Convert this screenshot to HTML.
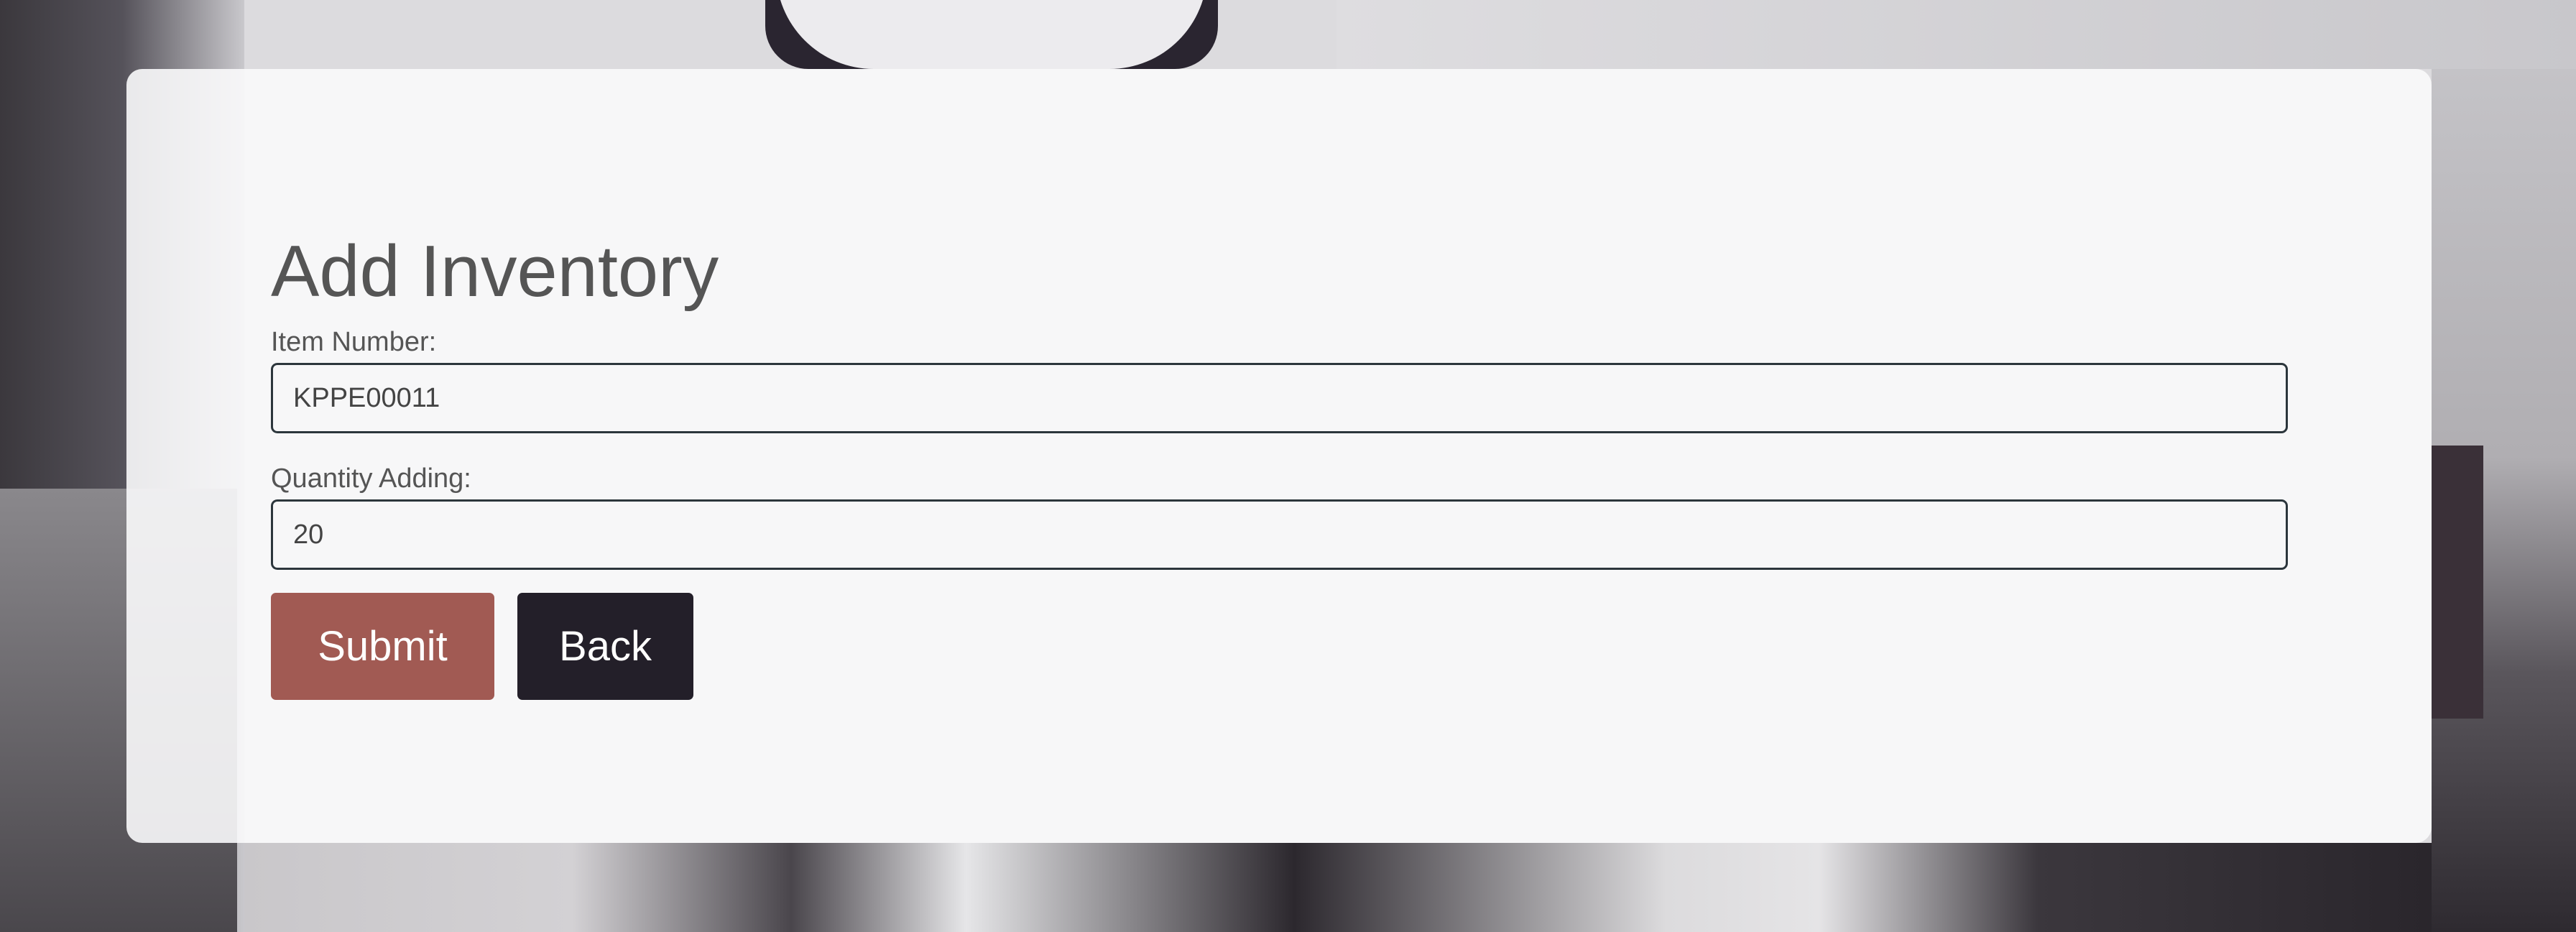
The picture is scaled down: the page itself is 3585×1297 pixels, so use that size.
<!DOCTYPE html>
<html><head><meta charset="utf-8"><style>
html,body{margin:0;padding:0;}
body{width:3585px;height:1297px;position:relative;overflow:hidden;font-family:"Liberation Sans",sans-serif;background:#dcdbde;}
.bg{position:absolute;}
.card{position:absolute;left:176px;top:96px;width:3208px;height:1077px;background:rgba(250,250,251,0.9);border-radius:22px;}
h1{position:absolute;left:377px;top:318px;margin:0;font-weight:normal;font-size:101px;color:#555;line-height:120px;}
.lbl{position:absolute;left:377px;font-size:38px;color:#555;line-height:44px;}
.inp{position:absolute;left:377px;width:2801px;height:92px;border:3px solid #2c363c;border-radius:9px;box-sizing:content-box;font-size:38px;color:#444;line-height:92px;}
.inp span{margin-left:28px;}
.btn{position:absolute;top:825px;height:149px;border-radius:7px;color:#fff;font-size:58px;line-height:149px;text-align:center;}
</style></head><body>
<div class="bg" style="left:0;top:0;width:340px;height:1297px;background:linear-gradient(90deg,#3b383d 0,#55525a 50%,#c9c8cc 100%);"></div>
<div class="bg" style="left:0;top:680px;width:330px;height:617px;background:linear-gradient(180deg,#8a888c,#4a474c);"></div>
<div class="bg" style="left:1065px;top:-40px;width:630px;height:136px;background:#2a2530;border-radius:0 0 60px 60px;"></div>
<div class="bg" style="left:1080px;top:-40px;width:600px;height:136px;background:#ecebee;border-radius:0 0 140px 140px;"></div>
<div class="bg" style="left:1860px;top:0;width:1725px;height:96px;background:linear-gradient(90deg,#dedde0,#c8c7cb);"></div>
<div class="bg" style="left:3384px;top:96px;width:201px;height:1201px;background:linear-gradient(180deg,#c4c3c7 0,#b0aeb2 45%,#5a565c 70%,#2e2a30 100%);"></div>
<div class="bg" style="left:3384px;top:620px;width:72px;height:380px;background:#3a3038;"></div>
<div class="bg" style="left:340px;top:1173px;width:3044px;height:124px;background:linear-gradient(90deg,#c9c7ca 0,#d3d1d4 15%,#4a464c 25%,#e6e6e8 33%,#2c282e 48%,#dcdbdd 65%,#e5e4e6 72%,#3b373d 82%,#2a262c 100%);"></div>
<div class="card"></div>
<h1>Add Inventory</h1>
<div class="lbl" style="top:454px;">Item Number:</div>
<div class="inp" style="top:505px;"><span>KPPE00011</span></div>
<div class="lbl" style="top:644px;">Quantity Adding:</div>
<div class="inp" style="top:695px;"><span>20</span></div>
<div class="btn" style="left:377px;width:311px;background:#a15a53;">Submit</div>
<div class="btn" style="left:720px;width:245px;background:#231f29;">Back</div>
</body></html>
